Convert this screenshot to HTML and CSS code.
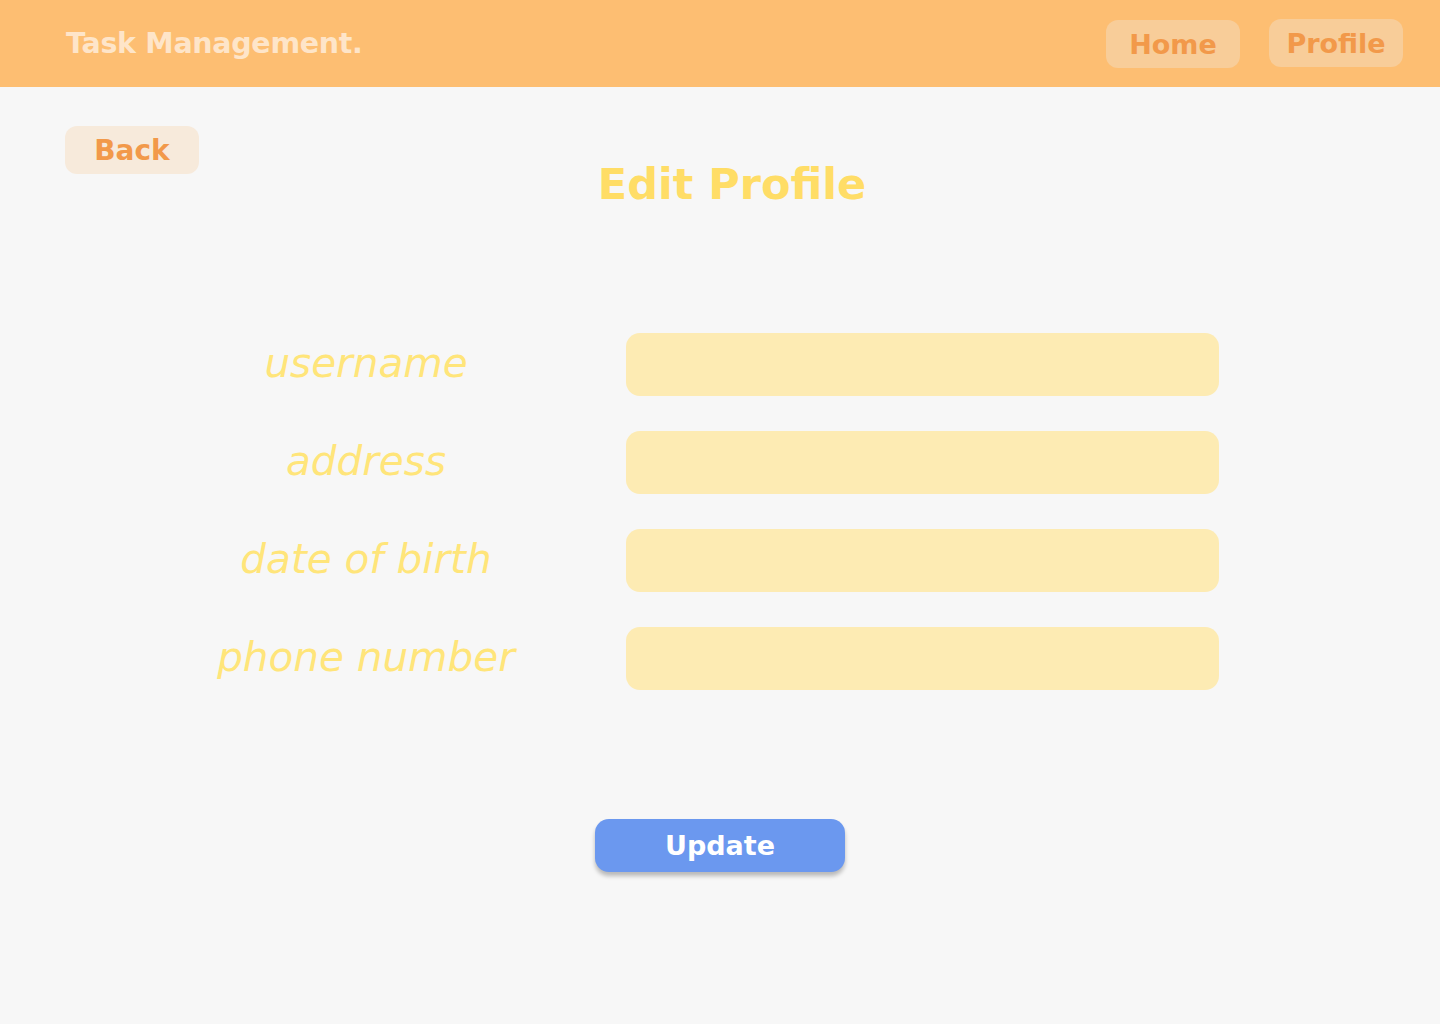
FILE: index.html
```html
<!DOCTYPE html>
<html lang="en">
<head>
<meta charset="utf-8">
<title>Task Management - Edit Profile</title>
<link rel="stylesheet" href="styles.css">
</head>
<body>
<header class="topbar">
  <div class="brand">Task Management.</div>
  <nav class="nav">
    <a class="nav-btn nav-home" href="#">Home</a>
    <a class="nav-btn nav-profile" href="#">Profile</a>
  </nav>
</header>
<main class="page">
  <div class="back-row">
    <a class="back-btn" href="#">Back</a>
  </div>
  <h1 class="title">Edit Profile</h1>
  <form class="form">
    <label class="label" for="username">username</label>
    <input class="field" id="username" type="text">
    <label class="label" for="address">address</label>
    <input class="field" id="address" type="text">
    <label class="label" for="dob">date of birth</label>
    <input class="field" id="dob" type="text">
    <label class="label" for="phone">phone number</label>
    <input class="field" id="phone" type="text">
  </form>
  <div class="actions">
    <button class="update-btn" type="button">Update</button>
  </div>
</main>
</body>
</html>
```
FILE: styles.css
```css
* { box-sizing: border-box; }
html, body { margin: 0; padding: 0; }
body {
  background: #f7f7f7;
  font-family: "DejaVu Sans", "Open Sans", sans-serif;
  width: 1440px;
  height: 1024px;
  overflow: hidden;
}
a { text-decoration: none; }

.topbar {
  height: 87px;
  background: #fdbe72;
  display: flex;
  align-items: center;
  justify-content: space-between;
  padding: 0 37px 0 66px;
}
.brand {
  color: #fee5c9;
  font-weight: 700;
  font-size: 28.5px;
  letter-spacing: -0.3px;
}
.nav { display: flex; gap: 29px; align-items: center; }
.nav-btn {
  width: 134px;
  height: 48px;
  border-radius: 12px;
  background: #f8cd99;
  color: #f2994a;
  font-weight: 700;
  font-size: 27px;
  display: flex;
  align-items: center;
  justify-content: center;
}
.nav-home { margin-top: 1px; }
.nav-profile { margin-top: -1px; }

.page { padding: 39px 0 0 0; }
.back-row { padding-left: 65px; height: 48px; }
.back-btn {
  width: 134px;
  height: 48px;
  border-radius: 12px;
  background: #f7eadb;
  color: #f2994a;
  font-weight: 700;
  font-size: 28px;
  display: flex;
  align-items: center;
  justify-content: center;
}
.title {
  margin: -27px 0 0 24px;
  text-align: center;
  color: #ffdd66;
  font-size: 43px;
  font-weight: 700;
  line-height: 74px;
}

.form {
  margin: 112px 0 0 166px;
  display: grid;
  grid-template-columns: 400px 593px;
  column-gap: 60px;
  grid-auto-rows: 63px;
  row-gap: 35px;
  align-items: center;
}
.label {
  text-align: center;
  color: #ffe57a;
  font-style: italic;
  font-weight: 300;
  font-size: 40.5px;
  margin-top: -4px;
}
.field {
  height: 63px;
  width: 593px;
  border: none;
  outline: none;
  border-radius: 14px;
  background: #fdebb3;
}

.actions {
  display: flex;
  justify-content: center;
  margin-top: 129px;
}
.update-btn {
  width: 250px;
  height: 53px;
  border: none;
  border-radius: 14px;
  background: #6b98ef;
  color: #ffffff;
  font-family: inherit;
  font-weight: 700;
  font-size: 27px;
  box-shadow: 0 4px 4px rgba(0,0,0,0.25);
  cursor: pointer;
}
```
